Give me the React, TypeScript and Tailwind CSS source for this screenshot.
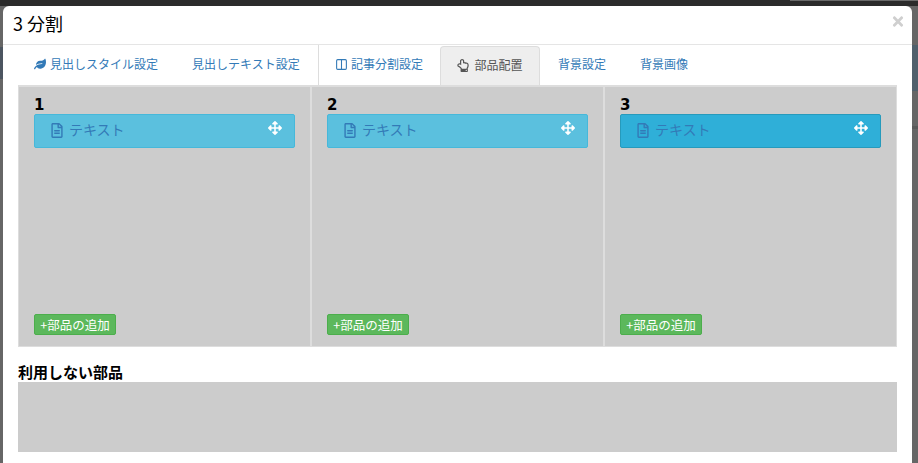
import { FaLeaf, FaRegFileAlt, FaArrowsAlt, FaRegHandPointUp, FaTimes } from "react-icons/fa";
import { Columns2 } from "lucide-react";

const font = { fontFamily: '"Noto Sans CJK JP", "Liberation Sans", sans-serif' };

function PartColumn({ num, active, last }: { num: string; active?: boolean; last?: boolean }) {
  return (
    <div className={`h-[259px] bg-[#cccccc] pl-[15px] flex flex-col w-[291px] ${last ? "" : "mr-[2px]"}`}>
      <div className="h-[12px] mt-[10px] text-[15px] leading-[16px] font-bold text-black" style={{ fontFamily: '"DejaVu Sans", sans-serif' }}>
        {num}
      </div>
      <div
        className={`mt-[5px] h-[34px] w-[261px] rounded-[2px] border flex items-center pl-[15px] pr-[12px] ${
          active ? "bg-[#2fafd8] border-[#269abc]" : "bg-[#5bc0de] border-[#46b8da]"
        }`}
      >
        <FaRegFileAlt className="-mt-[2px] w-[14px] h-[15px] text-[#337ab7]" />
        <span className="ml-[5px] -mt-[3px] text-[14px] text-[#337ab7]">テキスト</span>
        <FaArrowsAlt className="ml-auto -mt-[7px] w-[14px] h-[14px] text-white" />
      </div>
      <button className="mt-auto mb-[11px] w-[82px] h-[21px] bg-[#5cb85c] border border-[#4cae4c] rounded-[2px] text-white text-[12.5px] leading-[18px] text-center">
        +部品の追加
      </button>
    </div>
  );
}

export default function App() {
  return (
    <div className="w-[918px] h-[463px] overflow-hidden bg-[#666666] pl-[3px] pt-[6px] relative" style={font}>
      <div className="absolute top-0 left-0 w-full h-[6px] bg-[#2b2b2b]" />
      <div className="absolute top-0 left-[790px] w-[128px] h-[1px] bg-[#6a6a6a]" />
      <div className="absolute top-[47px] left-0 w-[3px] h-[32px] bg-[#4c5560]" />
      <div className="absolute top-[45px] right-0 w-[6px] h-[46px] bg-[#50606c]" />
      <div className="absolute top-[126px] right-0 w-[6px] h-[3px] bg-[#5a5a5a]" />
      <div className="relative w-[909px] h-[470px] bg-white rounded-t-[6px]">
        <div className="h-[39px] border-b border-[#e5e5e5] pl-[10px] pb-[4px] flex items-center">
          <h4 className="text-[18px] text-black">3 分割</h4>
          <FaTimes className="absolute right-[7px] top-[8px] w-[14px] h-[15px] text-[#cfcfcf]" />
        </div>
        <div className="h-[40px] pl-[15px] flex text-[12px] text-[#337ab7]">
          <div className="w-[158px] h-full flex items-center pl-[16px] pb-[2px]">
            <FaLeaf className="w-[12px] h-[12px] mr-[4px]" />
            見出しスタイル設定
          </div>
          <div className="w-[142px] h-full flex items-center pl-[16px] pb-[2px]">見出しテキスト設定</div>
          <div className="w-[122px] h-full flex items-center pl-[16px] pb-[2px] border-l border-[#dddddd]">
            <Columns2 className="w-[13px] h-[13px] mr-[3px]" strokeWidth={2} />
            記事分割設定
          </div>
          <div className="w-[100px] h-[39px] mt-[1px] pb-[2px] flex items-center justify-center bg-[#eeeeee] border border-b-0 border-[#dddddd] rounded-t-[4px] text-[#555555]">
            <FaRegHandPointUp className="w-[12px] h-[13px] mr-[5px]" />
            部品配置
          </div>
          <div className="w-[84px] h-full flex items-center pl-[18px] pb-[2px]">背景設定</div>
          <div className="h-full flex items-center pl-[16px] pb-[2px]">背景画像</div>
        </div>
        <div className="mx-[15px] w-[879px] h-[262px] bg-[#dddddd] p-[1px] pt-[2px] flex">
          <PartColumn num="1" />
          <PartColumn num="2" />
          <PartColumn num="3" active last />
        </div>
        <div className="mx-[15px] mt-[15px] text-[15px] leading-[20px] font-bold text-black">利用しない部品</div>
        <div className="mx-[15px] w-[879px] h-[70px] bg-[#cccccc]" />
      </div>
    </div>
  );
}
